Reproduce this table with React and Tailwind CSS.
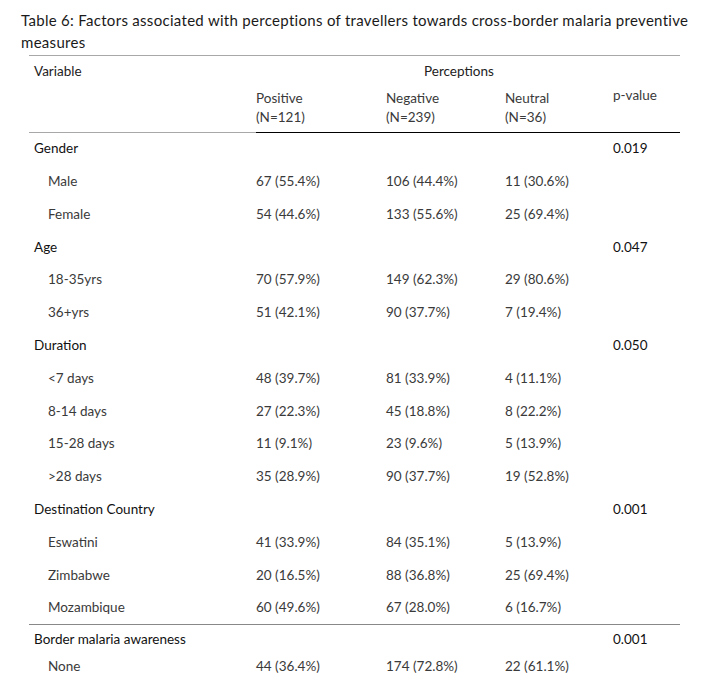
import React from "react";

const rows = [
  { label: "Gender", p: "0.019", group: true },
  { label: "Male", v: ["67 (55.4%)", "106 (44.4%)", "11 (30.6%)"] },
  { label: "Female", v: ["54 (44.6%)", "133 (55.6%)", "25 (69.4%)"] },
  { label: "Age", p: "0.047", group: true },
  { label: "18-35yrs", v: ["70 (57.9%)", "149 (62.3%)", "29 (80.6%)"] },
  { label: "36+yrs", v: ["51 (42.1%)", "90 (37.7%)", "7 (19.4%)"] },
  { label: "Duration", p: "0.050", group: true },
  { label: "<7 days", v: ["48 (39.7%)", "81 (33.9%)", "4 (11.1%)"] },
  { label: "8-14 days", v: ["27 (22.3%)", "45 (18.8%)", "8 (22.2%)"] },
  { label: "15-28 days", v: ["11 (9.1%)", "23 (9.6%)", "5 (13.9%)"] },
  { label: ">28 days", v: ["35 (28.9%)", "90 (37.7%)", "19 (52.8%)"] },
  { label: "Destination Country", p: "0.001", group: true },
  { label: "Eswatini", v: ["41 (33.9%)", "84 (35.1%)", "5 (13.9%)"] },
  { label: "Zimbabwe", v: ["20 (16.5%)", "88 (36.8%)", "25 (69.4%)"] },
  { label: "Mozambique", v: ["60 (49.6%)", "67 (28.0%)", "6 (16.7%)"] },
];

function Row({ r, h }) {
  return (
    <div className={`grid grid-cols-[227px_130px_119px_108px_67px] items-center ${h}`}>
      {r.group ? (
        <>
          <div className="pl-[5px] text-[#111]">{r.label}</div>
          <div />
          <div />
          <div />
          <div className="text-[#111]">{r.p}</div>
        </>
      ) : (
        <>
          <div className="pl-[19px]">{r.label}</div>
          <div>{r.v[0]}</div>
          <div>{r.v[1]}</div>
          <div>{r.v[2]}</div>
          <div />
        </>
      )}
    </div>
  );
}

export default function App() {
  return (
    <div className="w-[701px] h-[698px] bg-white text-[#3a3a3a] text-[13.5px] font-['Lato','Liberation_Sans',sans-serif] overflow-hidden">
      <div className="pt-[9px] pl-[21px] text-[15px] leading-[22px] text-[#1a1a1a] tracking-[0.3px] whitespace-nowrap">
        <div>Table 6: Factors associated with perceptions of travellers towards cross-border malaria preventive</div>
        <div>measures</div>
      </div>
      <div className="ml-[29px] w-[651px] mt-[2px]">
        <div className="border-t border-[#a8a8a8]">
          <div className="grid grid-cols-[227px_424px] h-[30px] items-center">
            <div className="pl-[5px] text-[#222]">Variable</div>
            <div className="pl-[168px] text-[#222]">Perceptions</div>
          </div>
          <div className="grid grid-cols-[227px_130px_119px_108px_67px] pt-[3px] pb-[5px] leading-[19px]">
            <div className="border-b border-[#a8a8a8] -mb-[5px]" />
            <div className="border-b border-black -mb-[5px] pb-[5px]">
              <div>Positive</div>
              <div>(N=121)</div>
            </div>
            <div className="border-b border-black -mb-[5px] pb-[5px]">
              <div>Negative</div>
              <div>(N=239)</div>
            </div>
            <div className="border-b border-black -mb-[5px] pb-[5px]">
              <div>Neutral</div>
              <div>(N=36)</div>
            </div>
            <div className="border-b border-black -mb-[5px] pb-[5px] -mt-[3px]">
              <div>p-value</div>
            </div>
          </div>
        </div>
        <div className="-mt-[1px]">
          {rows.map((r, i) => (
            <Row key={i} r={r} h="h-[32.8px]" />
          ))}
        </div>
        <div className="border-t border-[#888]">
          <Row r={{ label: "Border malaria awareness", p: "0.001", group: true }} h="h-[28px]" />
          <Row r={{ label: "None", v: ["44 (36.4%)", "174 (72.8%)", "22 (61.1%)"] }} h="h-[26px]" />
        </div>
      </div>
    </div>
  );
}
